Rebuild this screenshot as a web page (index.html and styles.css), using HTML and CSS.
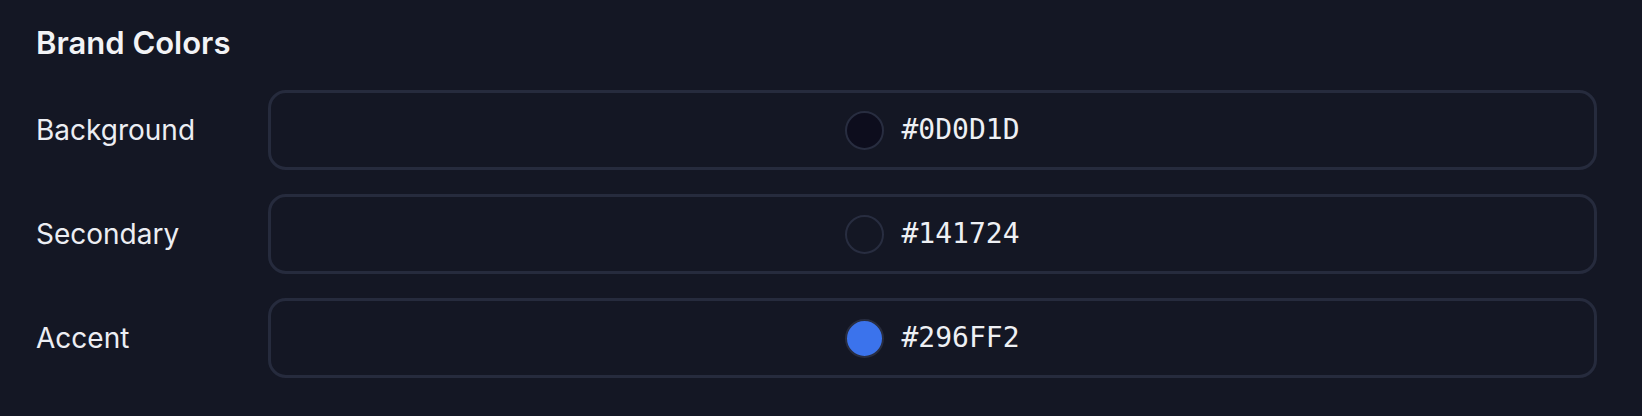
FILE: index.html
```html
<!DOCTYPE html>
<html lang="en">
<head>
<meta charset="utf-8">
<title>Brand Colors</title>
<link rel="stylesheet" href="styles.css">
</head>
<body>
<section class="panel">
  <h2 class="title">Brand Colors</h2>
  <div class="rows">
    <div class="row">
      <label class="label">Background</label>
      <div class="field">
        <span class="swatch" style="background:#0D0D1D"></span>
        <span class="hex">#0D0D1D</span>
      </div>
    </div>
    <div class="row">
      <label class="label">Secondary</label>
      <div class="field">
        <span class="swatch" style="background:#141724"></span>
        <span class="hex">#141724</span>
      </div>
    </div>
    <div class="row">
      <label class="label">Accent</label>
      <div class="field">
        <span class="swatch" style="background:#3B73EC"></span>
        <span class="hex">#296FF2</span>
      </div>
    </div>
  </div>
</section>
</body>
</html>
```

FILE: styles.css
```css
html, body {
  margin: 0;
  padding: 0;
  background: #141724;
  height: 100%;
}
body {
  font-family: Inter, "Noto Sans", sans-serif;
  color: #eef0f4;
}
.panel {
  padding: 25px 45px 0 36px;
}
.title {
  margin: 0;
  font-size: 31px;
  line-height: 36px;
  font-weight: 600;
  color: #f2f3f6;
}
.rows {
  margin-top: 29px;
  display: flex;
  flex-direction: column;
  gap: 24px;
}
.row {
  display: grid;
  grid-template-columns: 232px 1fr;
  align-items: center;
}
.label {
  font-size: 28px;
  line-height: 34px;
  font-weight: 400;
  color: #eceef3;
}
.field {
  height: 80px;
  box-sizing: border-box;
  border: 3px solid #262b3d;
  border-radius: 18px;
  display: flex;
  align-items: center;
  justify-content: center;
  gap: 17px;
}
.swatch {
  width: 39px;
  height: 39px;
  box-sizing: border-box;
  border-radius: 50%;
  border: 2px solid #282d40;
}
.hex {
  font-family: "DejaVu Sans Mono", "Liberation Mono", monospace;
  font-size: 28px;
  line-height: 34px;
  color: #eef0f4;
}
```
